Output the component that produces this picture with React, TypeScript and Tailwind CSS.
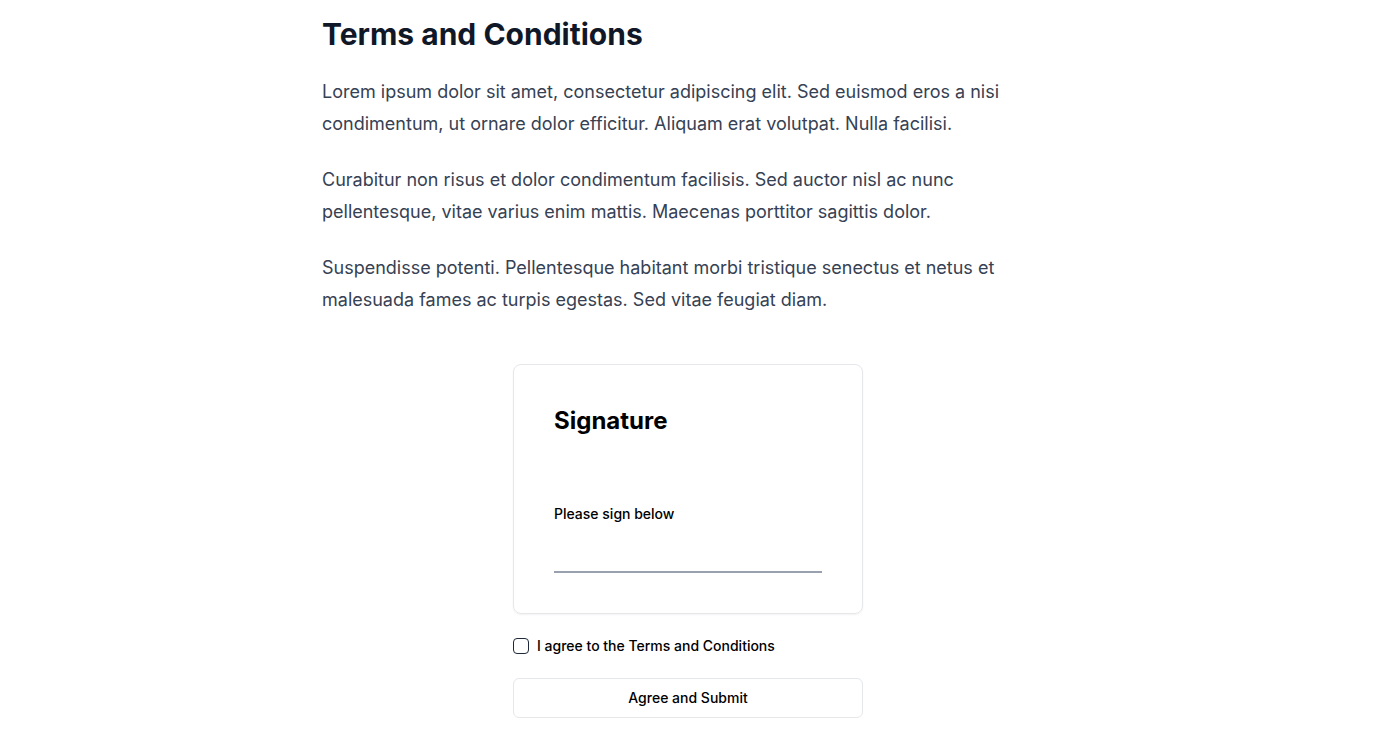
import React, { useState } from 'react';

const paragraphs = [
    'Lorem ipsum dolor sit amet, consectetur adipiscing elit. Sed euismod eros a nisi condimentum, ut ornare dolor efficitur. Aliquam erat volutpat. Nulla facilisi.',
    'Curabitur non risus et dolor condimentum facilisis. Sed auctor nisl ac nunc pellentesque, vitae varius enim mattis. Maecenas porttitor sagittis dolor.',
    'Suspendisse potenti. Pellentesque habitant morbi tristique senectus et netus et malesuada fames ac turpis egestas. Sed vitae feugiat diam.',
];

const App: React.FC = () => {
    const [agreed, setAgreed] = useState(false);

    return (
        <div className="min-h-screen bg-white font-['Inter',sans-serif]">
            <div className="max-w-3xl mx-auto px-4 pt-4">
                <div className="pl-[2px]">
                    <h1 className="text-3xl font-bold text-gray-900 mb-6">Terms and Conditions</h1>
                    <div className="space-y-6">
                        {paragraphs.map((p, idx) => (
                            <p key={idx} className="text-lg leading-8 text-gray-700">{p}</p>
                        ))}
                    </div>
                </div>

                <div className="w-[350px] mx-auto mt-12">
                    <div className="border border-gray-200 rounded-lg p-10 shadow-xs">
                        <h2 className="text-2xl font-bold text-black">Signature</h2>
                        <label className="block text-sm font-medium text-black mt-[67px]">Please sign below</label>
                        <div className="h-[49px] border-b-2 border-gray-400"></div>
                    </div>

                    <label className="flex items-center gap-2 mt-[22px] text-sm font-medium text-black">
                        <input
                            type="checkbox"
                            className="appearance-none h-4 w-4 m-0 border-[1.5px] border-gray-800 rounded-[4px] bg-white checked:bg-gray-900"
                            checked={agreed}
                            onChange={(e) => setAgreed(e.target.checked)}
                        />
                        I agree to the Terms and Conditions
                    </label>

                    <button
                        type="button"
                        className="w-full mt-[22px] h-10 border border-gray-200 rounded-md text-sm font-medium text-black bg-white"
                    >
                        Agree and Submit
                    </button>
                </div>
            </div>
        </div>
    );
};

export default App;
